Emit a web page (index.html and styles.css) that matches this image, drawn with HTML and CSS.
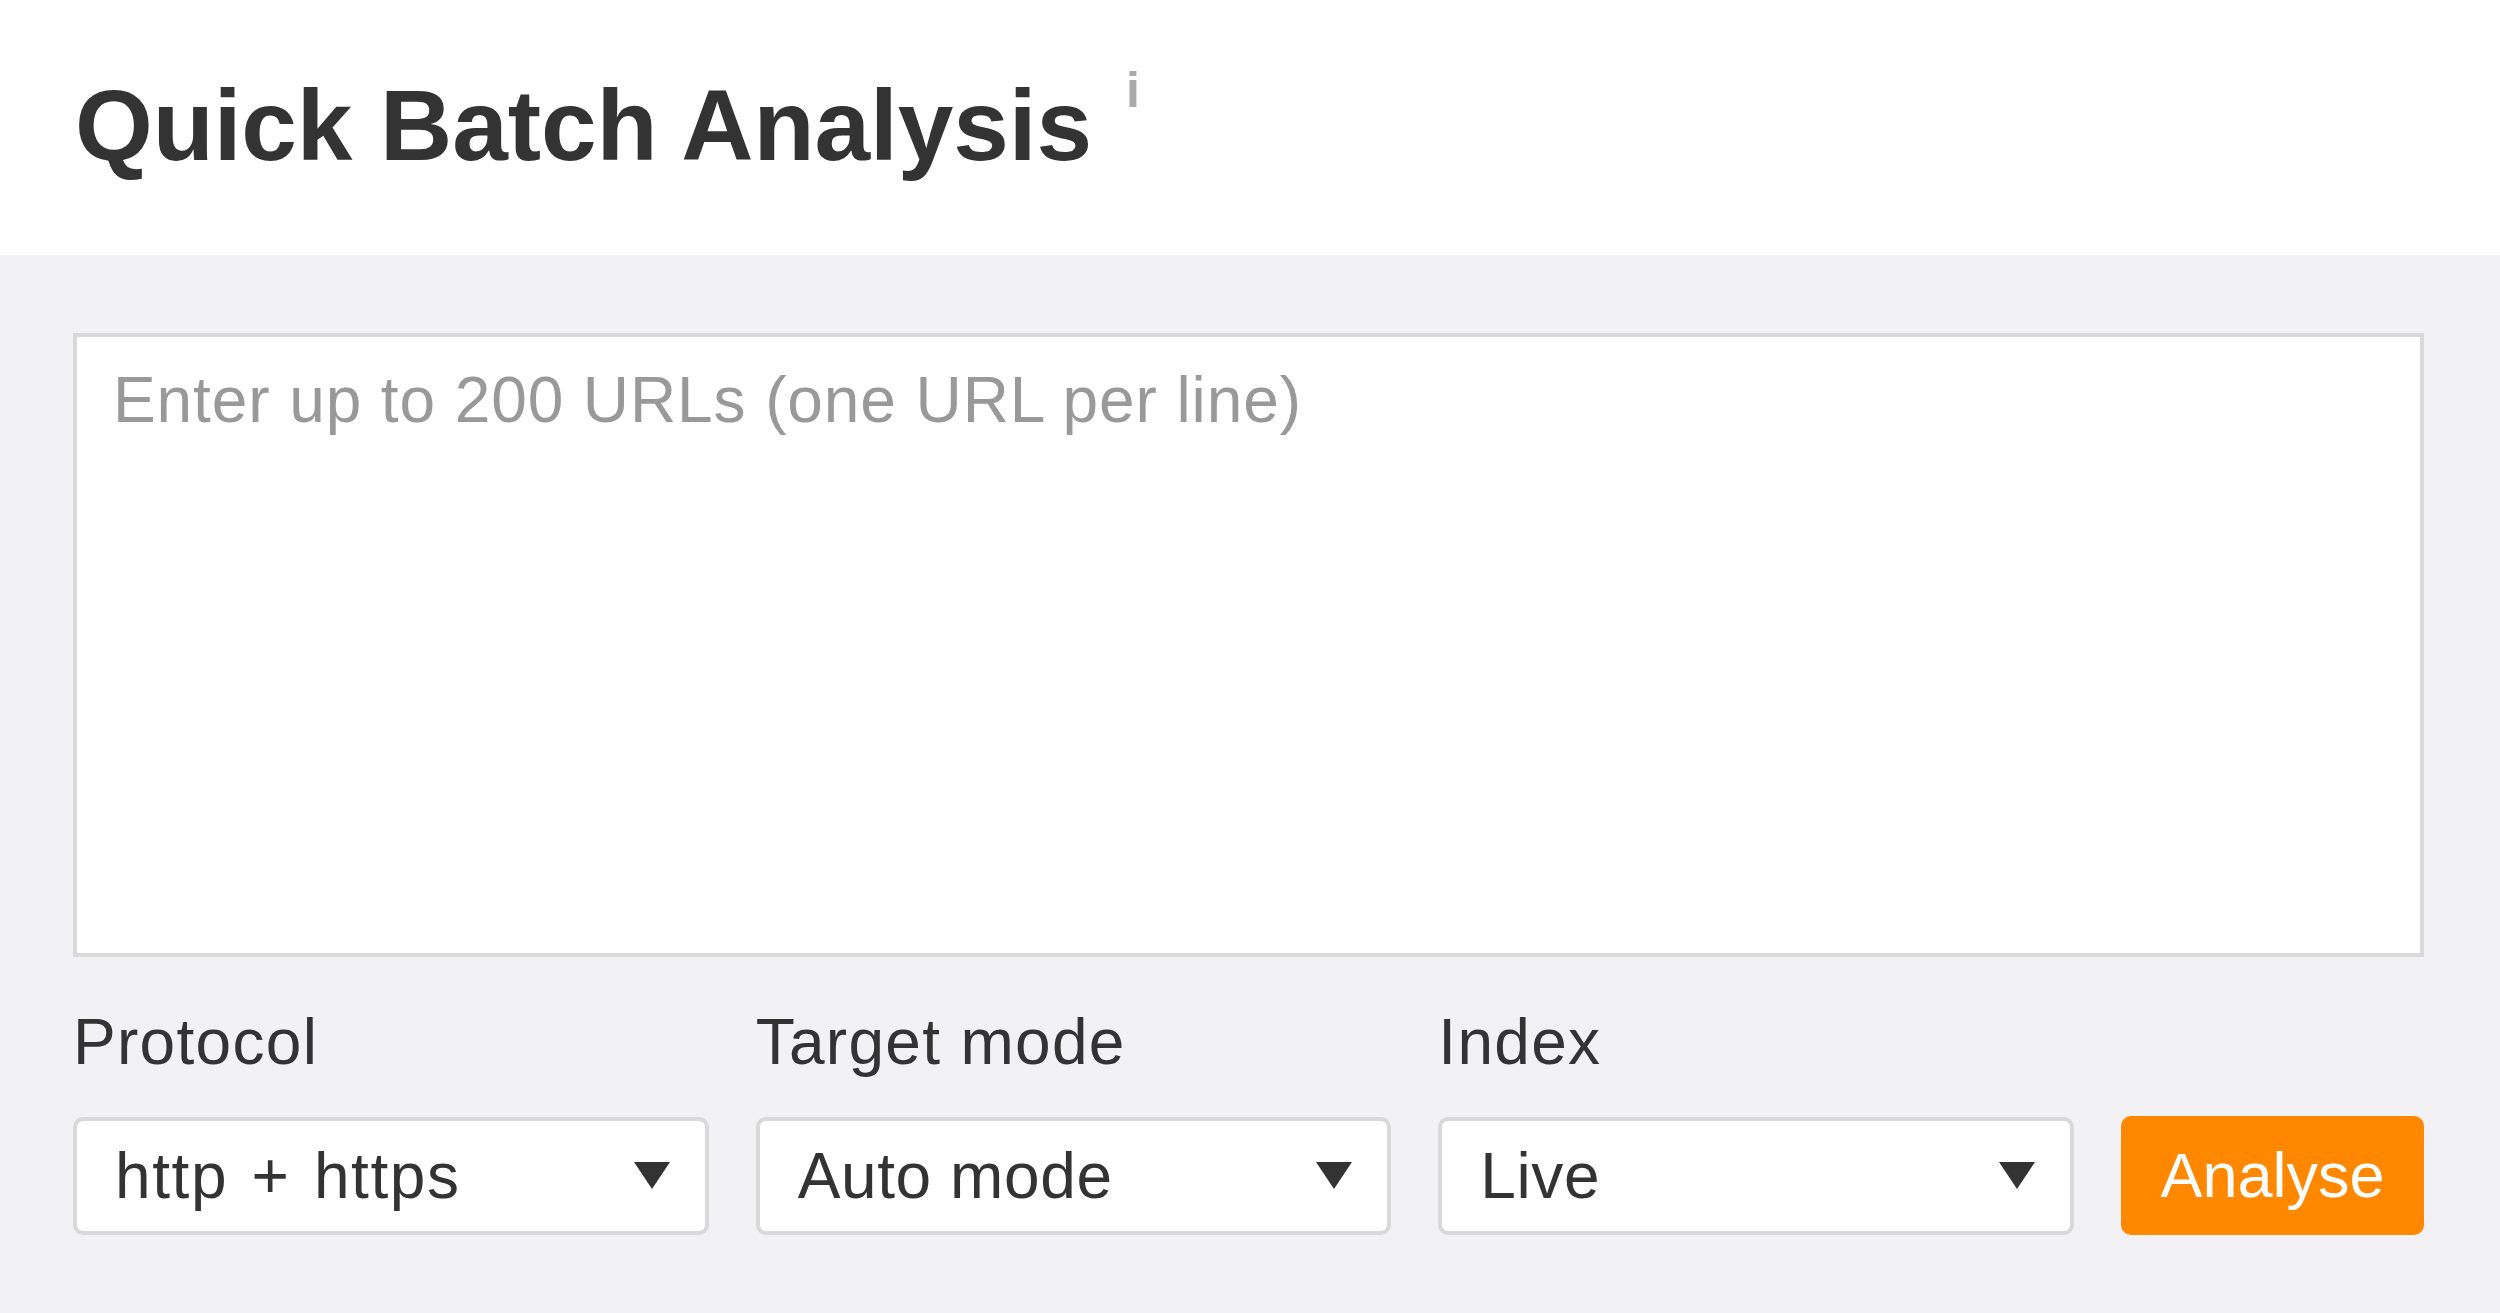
FILE: index.html
```html
<!DOCTYPE html>
<html lang="en">
<head>
    <meta charset="UTF-8">
    <meta name="viewport" content="width=device-width, initial-scale=1.0">
    <title>Quick Batch Analysis</title>
    <link rel="stylesheet" href="styles.css">
</head>
<body>
    <div class="header">
        <h1>Quick Batch Analysis<span class="info">i</span></h1>
    </div>

    <div class="main">
        <textarea class="urls" placeholder="Enter up to 200 URLs (one URL per line)"></textarea>

        <div class="options">
            <div class="field">
                <div class="label">Protocol</div>
                <div class="select">
                    <span class="value wide">http + https</span>
                    <svg class="arrow" width="36" height="27" viewBox="0 0 36 27"><path d="M0 0H36L18 27Z"/></svg>
                </div>
            </div>
            <div class="field">
                <div class="label">Target mode</div>
                <div class="select">
                    <span class="value">Auto mode</span>
                    <svg class="arrow" width="36" height="27" viewBox="0 0 36 27"><path d="M0 0H36L18 27Z"/></svg>
                </div>
            </div>
            <div class="field">
                <div class="label">Index</div>
                <div class="select">
                    <span class="value">Live</span>
                    <svg class="arrow" width="36" height="27" viewBox="0 0 36 27"><path d="M0 0H36L18 27Z"/></svg>
                </div>
            </div>
            <button class="analyse">Analyse</button>
        </div>
    </div>
</body>
</html>
```

FILE: styles.css
```css
body {
    margin: 0;
    font-family: 'Liberation Sans', Arial, sans-serif;
    color: #333;
    background-color: #f2f2f4;
    min-height: 1313px;
}
.header {
    background-color: #fff;
    height: 255px;
    box-sizing: border-box;
    padding: 75px 0 0 75px;
}
h1 {
    margin: 0;
    font-size: 100px;
    line-height: 100px;
    font-weight: bold;
    letter-spacing: -0.1px;
    color: #333;
}
.info {
    font-size: 50px;
    line-height: 0;
    color: #aaa;
    margin-left: 34px;
    vertical-align: 53px;
}
.main {
    padding: 78px 76px 0 73px;
}
.urls {
    display: block;
    width: 100%;
    height: 624px;
    box-sizing: border-box;
    border: 4px solid #d9d9d9;
    border-radius: 0;
    padding: 25px 36px;
    font-family: 'Liberation Sans', Arial, sans-serif;
    font-size: 64px;
    line-height: 1.2;
    letter-spacing: 0.9px;
    color: #333;
    background-color: #fff;
    resize: none;
    outline: none;
}
.urls::placeholder {
    color: #999;
}
.options {
    display: grid;
    grid-template-columns: 1fr 1fr 1fr 303px;
    gap: 47px;
    align-items: end;
    margin-top: 47px;
}
.label {
    font-size: 64px;
    line-height: 1.2;
    letter-spacing: 1.3px;
    margin-bottom: 36px;
}
.select {
    display: flex;
    align-items: center;
    justify-content: space-between;
    height: 118px;
    box-sizing: border-box;
    border: 4px solid #d9d9d9;
    border-radius: 10px;
    background-color: #fff;
    padding: 0 35px 0 38px;
    font-size: 64px;
}
.value {
    letter-spacing: 0.6px;
}
.value.wide {
    letter-spacing: 1.6px;
    word-spacing: 4px;
}
.arrow {
    fill: #333;
}
.analyse {
    height: 119px;
    border: none;
    border-radius: 10px;
    background-color: #ff8800;
    color: #fff;
    font-family: 'Liberation Sans', Arial, sans-serif;
    font-size: 63px;
    cursor: pointer;
}
```
